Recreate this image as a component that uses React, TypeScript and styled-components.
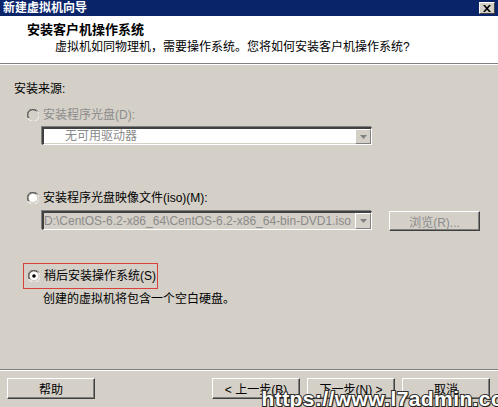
import styled, { createGlobalStyle } from 'styled-components';

const GlobalStyle = createGlobalStyle`
  html, body {
    margin: 0;
    padding: 0;
    background: #d4d0c8;
  }
  body {
    font-family: "Liberation Sans", "Noto Sans CJK SC", sans-serif;
    font-size: 12px;
  }
`;

const FONT = `"Liberation Sans", "Noto Sans CJK SC", sans-serif`;

export default function App() {
  return (
    <>
      <GlobalStyle />
      <Window>
        <TitleBar>
          <TitleText>新建虚拟机向导</TitleText>
          <CloseButton>
            <svg width="8" height="7" viewBox="0 0 8 7">
              <path d="M0 0h2l2 2.2L6 0h2L5 3.5 8 7H6L4 4.8 2 7H0l3-3.5z" fill="#000" />
            </svg>
          </CloseButton>
        </TitleBar>

        <Header>
          <HeaderTitle>安装客户机操作系统</HeaderTitle>
          <HeaderSub>虚拟机如同物理机，需要操作系统。您将如何安装客户机操作系统?</HeaderSub>
        </Header>
        <Separator />

        <Body>
          <SectionLabel>安装来源:</SectionLabel>

          <RadioRow $top={10}>
            <Radio disabled />
            <RadioLabel $disabled>安装程序光盘(D):</RadioLabel>
          </RadioRow>
          <FieldRow $top={4}>
            <Combo $width={330} $height={18}>
              <ComboText $muted $indent={21}>无可用驱动器</ComboText>
              <DropButton />
            </Combo>
          </FieldRow>

          <RadioRow $top={45}>
            <Radio />
            <RadioLabel>安装程序光盘映像文件(iso)(M):</RadioLabel>
          </RadioRow>
          <FieldRow $top={5}>
            <Combo $width={330} $height={19} $disabled>
              <ComboText $muted>D:\CentOS-6.2-x86_64\CentOS-6.2-x86_64-bin-DVD1.iso</ComboText>
              <DropButton />
            </Combo>
            <PushButton $width={91} $height={20} $disabled>浏览(R)...</PushButton>
          </FieldRow>

          <Highlight>
            <Radio checked />
            <RadioLabel>稍后安装操作系统(S)</RadioLabel>
          </Highlight>
          <Description>创建的虚拟机将包含一个空白硬盘。</Description>
        </Body>

        <Footer>
          <Separator />
          <ButtonBar>
            <PushButton $width={88} $height={21}>帮助</PushButton>
            <Spacer />
            <PushButton $width={88} $height={21}>&lt; 上一步(B)</PushButton>
            <PushButton $width={88} $height={21}>下一步(N) &gt;</PushButton>
            <PushButton $width={88} $height={21}>取消</PushButton>
          </ButtonBar>
        </Footer>

        <Watermark>https://www.l7admin.cc</Watermark>
      </Window>
    </>
  );
}

function Radio(props: { checked?: boolean; disabled?: boolean }) {
  return (
    <svg width="12" height="12" viewBox="0 0 12 12">
      <path d="M11 2.5A5.5 5.5 0 0 0 1 9" fill="none" stroke="#808080" strokeWidth="1" />
      <path d="M9.5 2.2A4.5 4.5 0 0 0 2.2 9.2" fill="none" stroke="#404040" strokeWidth="1" />
      <path d="M1 9.5A5.5 5.5 0 0 0 11 3" fill="none" stroke="#ffffff" strokeWidth="1" />
      <path d="M2.5 9.8A4.5 4.5 0 0 0 9.8 2.5" fill="none" stroke="#d4d0c8" strokeWidth="1" />
      <circle cx="6" cy="6" r="4" fill={props.disabled ? '#d4d0c8' : '#ffffff'} />
      {props.checked && <circle cx="6" cy="6" r="1.8" fill="#000" />}
    </svg>
  );
}

function DropButton() {
  return (
    <DropButtonStyle>
      <svg width="7" height="4" viewBox="0 0 7 4">
        <path d="M0 0h7L3.5 4z" fill="#808080" />
      </svg>
    </DropButtonStyle>
  );
}

const Window = styled.div`
  position: relative;
  width: 498px;
  height: 407px;
  background: #d4d0c8;
  display: flex;
  flex-direction: column;
  overflow: hidden;
  font-family: ${FONT};
`;

const TitleBar = styled.div`
  height: 16px;
  background: #0a246a;
  display: flex;
  align-items: center;
  justify-content: space-between;
  padding: 0 3px 0 3px;
`;

const TitleText = styled.span`
  color: #fff;
  font-weight: bold;
  font-size: 12px;
  line-height: 16px;
`;

const CloseButton = styled.div`
  width: 16px;
  height: 12px;
  box-sizing: border-box;
  background: #d4d0c8;
  border-top: 1px solid #fff;
  border-left: 1px solid #fff;
  border-right: 1px solid #404040;
  border-bottom: 1px solid #404040;
  display: flex;
  align-items: center;
  justify-content: center;
`;

const Header = styled.div`
  height: 47px;
  background: #fff;
  display: flex;
  flex-direction: column;
  box-sizing: border-box;
  padding-top: 6px;
`;

const HeaderTitle = styled.div`
  font-weight: bold;
  font-size: 13px;
  line-height: 16px;
  color: #000;
  padding-left: 27px;
`;

const HeaderSub = styled.div`
  font-size: 12px;
  line-height: 16px;
  color: #000;
  padding-left: 55px;
  margin-top: 1px;
`;

const Separator = styled.div`
  height: 0;
  border-top: 1px solid #808080;
  border-bottom: 1px solid #fff;
`;

const Body = styled.div`
  flex: 1;
  display: flex;
  flex-direction: column;
  padding: 16px 0 0 14px;
`;

const SectionLabel = styled.div`
  color: #000;
  font-size: 12px;
  line-height: 16px;
`;

const RadioRow = styled.div<{ $top: number }>`
  display: flex;
  align-items: center;
  gap: 4px;
  margin-top: ${(p) => p.$top}px;
  padding-left: 13px;
  height: 16px;
`;

const RadioLabel = styled.span<{ $disabled?: boolean }>`
  font-size: 12px;
  line-height: 16px;
  color: ${(p) => (p.$disabled ? '#8c8c8c' : '#000')};
`;

const FieldRow = styled.div<{ $top: number }>`
  display: flex;
  align-items: flex-start;
  gap: 17px;
  margin-top: ${(p) => p.$top}px;
  padding-left: 28px;
`;

const Combo = styled.div<{ $width: number; $height: number; $disabled?: boolean }>`
  width: ${(p) => p.$width}px;
  height: ${(p) => p.$height}px;
  box-sizing: border-box;
  background: ${(p) => (p.$disabled ? '#d4d0c8' : '#fff')};
  border-top: 2px solid #404040;
  border-left: 2px solid #404040;
  border-right: 1px solid #fff;
  border-bottom: 1px solid #fff;
  box-shadow: inset -1px -1px 0 #d4d0c8, -1px -1px 0 #808080;
  display: flex;
  align-items: center;
  overflow: hidden;
`;

const ComboText = styled.span<{ $muted?: boolean; $indent?: number }>`
  flex: 1;
  padding-left: ${(p) => p.$indent ?? 0}px;
  font-size: 12px;
  line-height: 15px;
  color: ${(p) => (p.$muted ? '#8a8a8a' : '#000')};
  white-space: nowrap;
  overflow: hidden;
`;

const DropButtonStyle = styled.div`
  width: 16px;
  height: 100%;
  box-sizing: border-box;
  background: #d4d0c8;
  border-top: 1px solid #fff;
  border-left: 1px solid #fff;
  border-right: 1px solid #808080;
  border-bottom: 1px solid #808080;
  display: flex;
  align-items: center;
  justify-content: center;
  flex-shrink: 0;
`;

const PushButton = styled.div<{ $width: number; $height: number; $disabled?: boolean }>`
  width: ${(p) => p.$width}px;
  height: ${(p) => p.$height}px;
  box-sizing: border-box;
  background: #d4d0c8;
  border-top: 1px solid #fff;
  border-left: 1px solid #fff;
  border-right: 1px solid #404040;
  border-bottom: 1px solid #404040;
  box-shadow: inset -1px -1px 0 #808080;
  display: flex;
  align-items: center;
  justify-content: center;
  font-size: 12px;
  color: ${(p) => (p.$disabled ? '#8c8c8c' : '#000')};
  white-space: nowrap;
`;

const Highlight = styled.div`
  display: flex;
  align-items: center;
  gap: 4px;
  margin-top: 32px;
  margin-left: 9px;
  width: 135px;
  height: 26px;
  box-sizing: border-box;
  padding-left: 4px;
  border: 1px solid #d9403a;
`;

const Description = styled.div`
  padding-left: 29px;
  margin-top: 2px;
  font-size: 12px;
  line-height: 16px;
  color: #000;
`;

const Footer = styled.div`
  display: flex;
  flex-direction: column;
  height: 38px;
  margin-bottom: 0;
`;

const ButtonBar = styled.div`
  display: flex;
  align-items: center;
  gap: 7px;
  padding: 7px 8px 0 7px;
`;

const Spacer = styled.div`
  flex: 1;
`;

const Watermark = styled.div`
  position: absolute;
  right: -5px;
  bottom: -4px;
  font-family: "Liberation Sans", sans-serif;
  font-weight: bold;
  font-size: 21px;
  letter-spacing: 0.4px;
  color: #fff;
  -webkit-text-stroke: 2px #303030;
  paint-order: stroke fill;
  text-shadow: 1px 1px 1px #202020;
  white-space: nowrap;
`;
